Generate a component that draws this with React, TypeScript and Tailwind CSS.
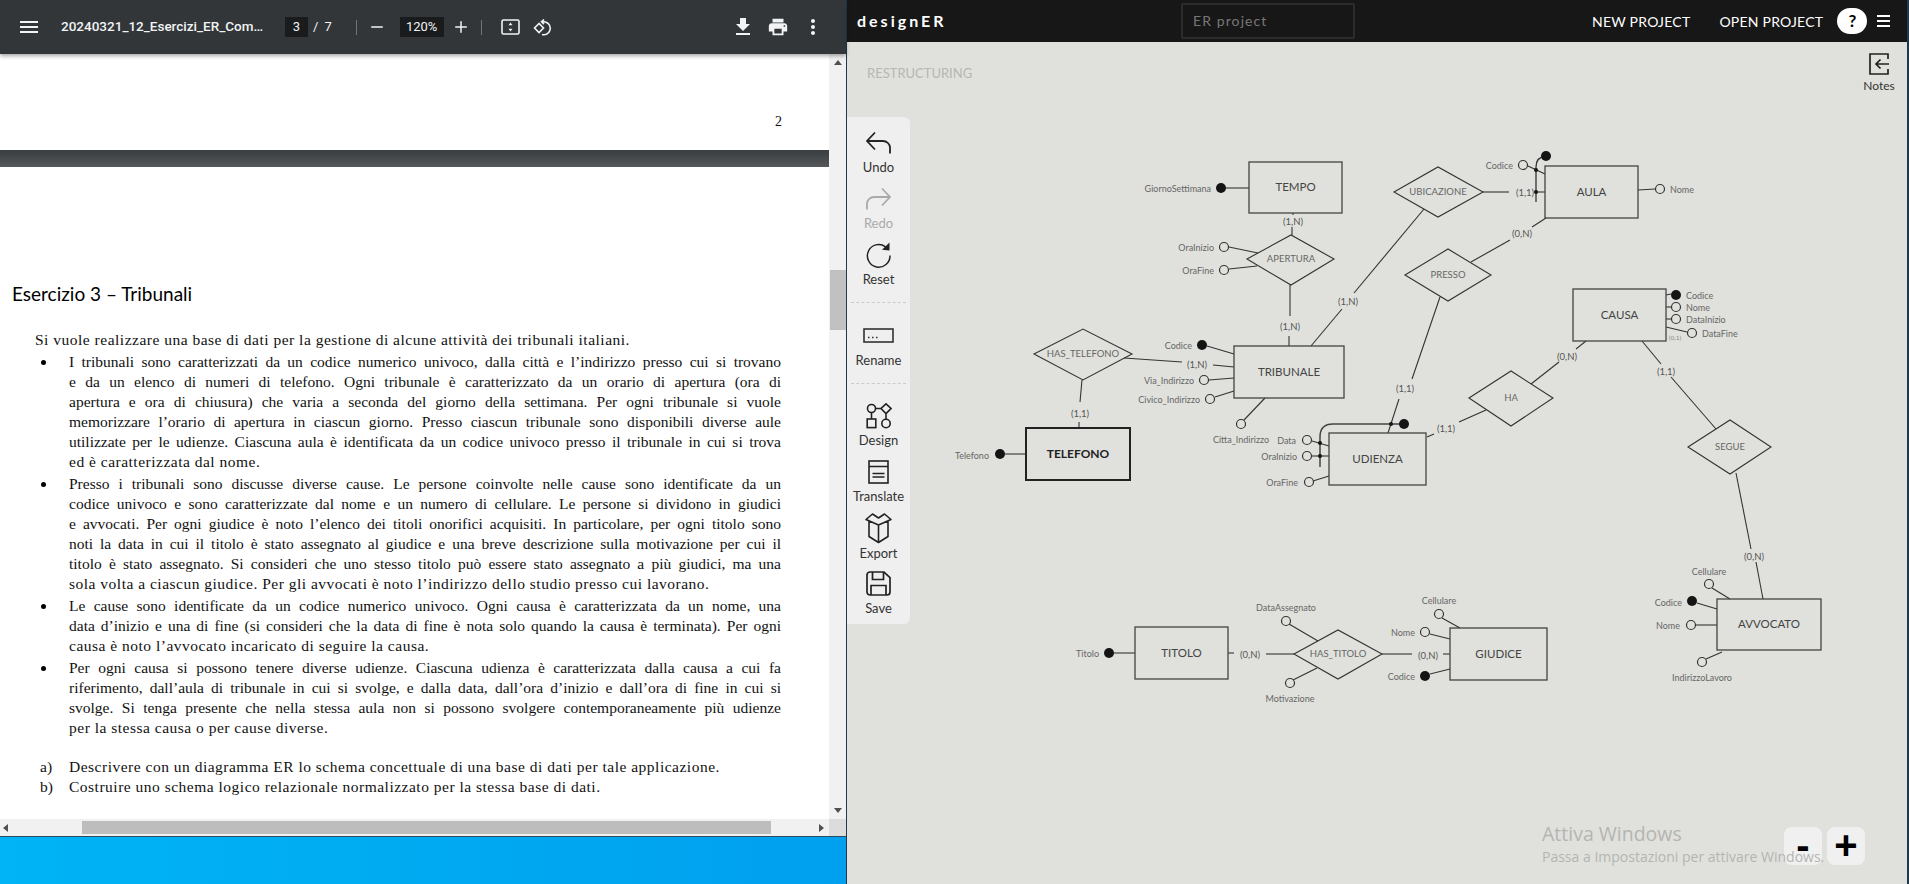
import { MdFileDownload, MdMenu, MdMoreVert, MdPrint } from "react-icons/md";
import { Minus, Plus } from "lucide-react";
import type { ReactNode } from "react";

// ---- PDF text, kept line by line so the wrapping is the same as the document
const bullets: string[][] = [
  [
    "I tribunali sono caratterizzati da un codice numerico univoco, dalla città e l’indirizzo presso cui si trovano",
    "e da un elenco di numeri di telefono. Ogni tribunale è caratterizzato da un orario di apertura (ora di",
    "apertura e ora di chiusura) che varia a seconda del giorno della settimana. Per ogni tribunale si vuole",
    "memorizzare l’orario di apertura in ciascun giorno. Presso ciascun tribunale sono disponibili diverse aule",
    "utilizzate per le udienze. Ciascuna aula è identificata da un codice univoco presso il tribunale in cui si trova",
    "ed è caratterizzata dal nome.",
  ],
  [
    "Presso i tribunali sono discusse diverse cause. Le persone coinvolte nelle cause sono identificate da un",
    "codice univoco e sono caratterizzate dal nome e un numero di cellulare. Le persone si dividono in giudici",
    "e avvocati. Per ogni giudice è noto l’elenco dei titoli onorifici acquisiti. In particolare, per ogni titolo sono",
    "noti la data in cui il titolo è stato assegnato al giudice e una breve descrizione sulla motivazione per cui il",
    "titolo è stato assegnato. Si consideri che uno stesso titolo può essere stato assegnato a più giudici, ma una",
    "sola volta a ciascun giudice. Per gli avvocati è noto l’indirizzo dello studio presso cui lavorano.",
  ],
  [
    "Le cause sono identificate da un codice numerico univoco. Ogni causa è caratterizzata da un nome, una",
    "data d’inizio e una di fine (si consideri che la data di fine è nota solo quando la causa è terminata). Per ogni",
    "causa è noto l’avvocato incaricato di seguire la causa.",
  ],
  [
    "Per ogni causa si possono tenere diverse udienze. Ciascuna udienza è caratterizzata dalla causa a cui fa",
    "riferimento, dall’aula di tribunale in cui si svolge, e dalla data, dall’ora d’inizio e dall’ora di fine in cui si",
    "svolge. Si tenga presente che nella stessa aula non si possono svolgere contemporaneamente più udienze",
    "per la stessa causa o per cause diverse.",
  ],
];

// ---- ER diagram, in page coordinates (svg viewBox starts at the canvas corner)
const entities: [string, number, number, number, number, boolean?][] = [
  ["TEMPO", 1249, 162, 1342, 213],
  ["TRIBUNALE", 1234, 346, 1344, 398],
  ["TELEFONO", 1026, 428, 1130, 480, true],
  ["AULA", 1545, 166, 1638, 218],
  ["UDIENZA", 1329, 433, 1426, 485],
  ["CAUSA", 1573, 289, 1666, 341],
  ["TITOLO", 1135, 627, 1228, 679],
  ["GIUDICE", 1450, 628, 1547, 680],
  ["AVVOCATO", 1717, 599, 1821, 650],
];

const diamonds: [string, number, number, number, number, number, number][] = [
  ["APERTURA", 1247, 259, 1334, 235, 285, 1291],
  ["UBICAZIONE", 1394, 192, 1483, 167, 217, 1438],
  ["PRESSO", 1405, 275, 1491, 249, 301, 1448],
  ["HAS_TELEFONO", 1034, 354, 1132, 329, 380, 1083],
  ["HA", 1469, 398, 1553, 371, 426, 1511],
  ["SEGUE", 1688, 447, 1771, 420, 474, 1730],
  ["HAS_TITOLO", 1294, 654, 1382, 630, 679, 1338],
];

const lines: number[][] = [
  [1226, 188, 1249, 188],
  [1293, 213, 1293, 215], [1292, 227, 1292, 235],
  [1229, 247, 1258, 253],
  [1229, 269, 1257, 266],
  [1290, 285, 1290, 316], [1289, 336, 1289, 346],
  [1311, 346, 1342, 309], [1354, 293, 1424, 209],
  [1483, 192, 1509, 192], [1535, 192, 1545, 192],
  [1638, 190, 1655, 189],
  [1528, 166, 1545, 174],
  [1546, 218, 1532, 227], [1510, 240, 1471, 262],
  [1440, 297, 1412, 379], [1399, 399, 1388, 433],
  [1207, 346, 1234, 354],
  [1124, 358, 1182, 362], [1213, 365, 1234, 367],
  [1209, 380, 1234, 378],
  [1215, 397, 1234, 391],
  [1244, 420, 1265, 398],
  [1082, 380, 1080, 402], [1079, 422, 1079, 428],
  [1005, 454, 1026, 454],
  [1312, 441, 1329, 446],
  [1312, 456, 1329, 456],
  [1313, 481, 1329, 476],
  [1427, 437, 1434, 434], [1459, 422, 1486, 410],
  [1531, 384, 1559, 362], [1576, 349, 1586, 341],
  [1642, 341, 1661, 364], [1671, 377, 1716, 429],
  [1666, 295, 1671, 294],
  [1666, 307, 1671, 307],
  [1666, 319, 1671, 319],
  [1666, 327, 1687, 332],
  [1736, 473, 1751, 549], [1756, 562, 1763, 599],
  [1712, 588, 1730, 599],
  [1697, 603, 1717, 609],
  [1696, 625, 1717, 625],
  [1706, 659, 1722, 652],
  [1442, 618, 1460, 628],
  [1430, 634, 1450, 639],
  [1430, 674, 1450, 669],
  [1382, 654, 1412, 654], [1443, 654, 1450, 654],
  [1114, 653, 1135, 653],
  [1228, 653, 1234, 653], [1266, 654, 1294, 654],
  [1289, 624, 1318, 641],
  [1293, 680, 1317, 668],
];

const hollow: number[][] = [
  [1224, 247], [1224, 270], [1660, 189], [1523, 165], [1204, 380], [1210, 399], [1241, 424],
  [1307, 440], [1307, 456], [1309, 482], [1676, 307], [1676, 319], [1692, 333], [1709, 584],
  [1691, 625], [1702, 662], [1439, 614], [1425, 632], [1286, 621], [1290, 683],
];

const solid: number[][] = [
  [1221, 188], [1202, 345], [1000, 454], [1546, 156], [1404, 424], [1676, 295], [1692, 601],
  [1425, 676], [1109, 653],
];

const junctions: number[][] = [
  [1536, 170], [1536, 192], [1391, 424], [1320, 443], [1320, 456],
];

const attributes: [string, number, number, "start" | "middle" | "end"][] = [
  ["GiornoSettimana", 1211, 188, "end"],
  ["OraInizio", 1214, 247, "end"],
  ["OraFine", 1214, 270, "end"],
  ["Codice", 1192, 345, "end"],
  ["Via_Indirizzo", 1194, 380, "end"],
  ["Civico_Indirizzo", 1200, 399, "end"],
  ["Citta_Indirizzo", 1241, 439, "middle"],
  ["Telefono", 989, 455, "end"],
  ["Codice", 1513, 165, "end"],
  ["Nome", 1670, 189, "start"],
  ["Data", 1296, 440, "end"],
  ["OraInizio", 1297, 456, "end"],
  ["OraFine", 1298, 482, "end"],
  ["Codice", 1686, 295, "start"],
  ["Nome", 1686, 307, "start"],
  ["DataInizio", 1686, 319, "start"],
  ["DataFine", 1702, 333, "start"],
  ["Cellulare", 1709, 571, "middle"],
  ["Codice", 1682, 602, "end"],
  ["Nome", 1680, 625, "end"],
  ["IndirizzoLavoro", 1702, 677, "middle"],
  ["Cellulare", 1439, 600, "middle"],
  ["Nome", 1415, 632, "end"],
  ["Codice", 1415, 676, "end"],
  ["Titolo", 1099, 653, "end"],
  ["DataAssegnato", 1286, 607, "middle"],
  ["Motivazione", 1290, 698, "middle"],
];

const cardinalities: [string, number, number][] = [
  ["(1,N)", 1293, 221],
  ["(1,N)", 1290, 326],
  ["(1,N)", 1348, 301],
  ["(1,N)", 1197, 364],
  ["(1,1)", 1080, 413],
  ["(1,1)", 1525, 192],
  ["(0,N)", 1522, 233],
  ["(1,1)", 1405, 388],
  ["(1,1)", 1446, 428],
  ["(0,N)", 1567, 356],
  ["(1,1)", 1666, 371],
  ["(0,N)", 1754, 556],
  ["(0,N)", 1250, 654],
  ["(0,N)", 1428, 655],
];

function Diagram() {
  return (
    <svg className="absolute left-0 top-0 h-[842px] w-[1060px]" viewBox="847 42 1060 842" fill="none">
      {lines.map(([x1, y1, x2, y2], i) => (
        <line key={i} x1={x1} y1={y1} x2={x2} y2={y2} stroke="#333" strokeWidth="1.1" />
      ))}
      <path d="M1536 202V167Q1536 157 1546 156" stroke="#333" strokeWidth="1.3" />
      <path d="M1320 467V437Q1320 424 1333 424H1404" stroke="#444" strokeWidth="1.5" />
      {entities.map(([name, x1, y1, x2, y2, strong]) => (
        <g key={name}>
          <rect x={x1} y={y1} width={x2 - x1} height={y2 - y1} stroke={strong ? "#222" : "#444"} strokeWidth={strong ? 2 : 1.3} />
          <text
            x={(x1 + x2) / 2}
            y={(y1 + y2) / 2 - 1}
            textAnchor="middle"
            dominantBaseline="central"
            className={strong ? "fill-[#222] text-[12px] font-bold" : "fill-[#444] text-[11.5px]"}
          >
            {name}
          </text>
        </g>
      ))}
      {diamonds.map(([name, l, cy, r, t, b, cx]) => (
        <g key={name}>
          <polygon points={`${l},${cy} ${cx},${t} ${r},${cy} ${cx},${b}`} stroke="#333" strokeWidth="1.1" />
          <text x={cx} y={cy - 1} textAnchor="middle" dominantBaseline="central" className="fill-[#666] text-[9.5px]">
            {name}
          </text>
        </g>
      ))}
      {hollow.map(([cx, cy], i) => (
        <circle key={i} cx={cx} cy={cy} r="4.5" fill="#e0e1dc" stroke="#333" strokeWidth="1.2" />
      ))}
      {solid.map(([cx, cy], i) => (
        <circle key={i} cx={cx} cy={cy} r="5" fill="#141414" />
      ))}
      {junctions.map(([cx, cy], i) => (
        <circle key={i} cx={cx} cy={cy} r="2" fill="#141414" />
      ))}
      {attributes.map(([label, x, y, anchor], i) => (
        <text key={i} x={x} y={y} textAnchor={anchor} dominantBaseline="central" className="fill-[#666] text-[9px]">
          {label}
        </text>
      ))}
      {cardinalities.map(([label, x, y], i) => (
        <text key={i} x={x} y={y} textAnchor="middle" dominantBaseline="central" className="fill-[#555] text-[9.5px]">
          {label}
        </text>
      ))}
      <text x="1675" y="337" textAnchor="middle" dominantBaseline="central" className="fill-[#888] text-[6.5px]">
        (0,1)
      </text>
    </svg>
  );
}

// ---- tool icons
function UndoIcon({ color }: { color: string }) {
  return (
    <svg width="25" height="23" viewBox="0 0 25 23" fill="none" stroke={color} strokeWidth="1.8">
      <path d="M9 1.5 1 10l8 8.5M1 10h16a7 7 0 0 1 7 6.5V22.5" />
    </svg>
  );
}

function RedoIcon({ color }: { color: string }) {
  return (
    <svg width="25" height="23" viewBox="0 0 25 23" fill="none" stroke={color} strokeWidth="1.8">
      <path d="M16 1.5 24 10l-8 8.5M24 10H8a7 7 0 0 0-7 6.5V22.5" />
    </svg>
  );
}

function ResetIcon() {
  return (
    <svg width="27" height="27" viewBox="0 0 27 27" fill="none" stroke="#222" strokeWidth="1.5">
      <path d="M20.5 5.8A11.3 11.3 0 1 0 25 14.5" />
      <path d="M24.5 1.5v8l-7.5-.8z" fill="#222" stroke="none" />
    </svg>
  );
}

function RenameIcon() {
  return (
    <svg width="31" height="15" viewBox="0 0 31 15" fill="none" stroke="#333" strokeWidth="1.6">
      <rect x="1" y="1" width="29" height="13" />
      <path d="M5 9.5h1.5M9 9.5h1.5M13 9.5h1.5" strokeWidth="1.4" />
    </svg>
  );
}

function DesignIcon() {
  return (
    <svg width="26" height="26" viewBox="0 0 26 26" fill="none" stroke="#222" strokeWidth="1.6">
      <circle cx="5.5" cy="5.5" r="4" />
      <path d="M20 .8 25 5.5 20 10.5 15 5.5zM9.5 5.5H15M5.5 9.5V16M20 10.5V16" />
      <rect x="1.2" y="16" width="8.6" height="8.6" />
      <circle cx="20" cy="20.5" r="4.2" />
    </svg>
  );
}

function TranslateIcon() {
  return (
    <svg width="21" height="24" viewBox="0 0 21 24" fill="none" stroke="#222" strokeWidth="1.6">
      <rect x="1" y="1" width="19" height="22" />
      <path d="M1 6.5h19M4.5 13.5h12M4.5 17h12" />
    </svg>
  );
}

function ExportIcon() {
  return (
    <svg width="29" height="32" viewBox="0 0 29 32" fill="none" stroke="#222" strokeWidth="1.6" strokeLinejoin="round">
      <path d="M14.5 13 2 7.5l6.5-5.5 6 4 6-4L27 7.500zM5 9.500V24.500l9.500 6 9.500-6V9.500M14.500 13v17.500" />
    </svg>
  );
}

function SaveIcon() {
  return (
    <svg width="25" height="25" viewBox="0 0 25 25" fill="none" stroke="#222" strokeWidth="1.7">
      <path d="M4 1h14l6 5.500V21a3 3 0 0 1-3 3H4a3 3 0 0 1-3-3V4a3 3 0 0 1 3-3z" />
      <path d="M6.500 1v7.500h11V1M5 24v-9.500h15V24" />
    </svg>
  );
}

function NotesIcon() {
  return (
    <svg width="20" height="22" viewBox="0 0 20 22" fill="none" stroke="#222" strokeWidth="1.7">
      <path d="M19 6V1H1v20h18v-5M20 11H7M11.500 6.500 7 11l4.500 4.500" />
    </svg>
  );
}

function FitIcon() {
  return (
    <svg width="19" height="16" viewBox="0 0 19 16" fill="none">
      <rect x="1" y="1" width="17" height="14" rx="1.500" stroke="#f1f3f4" strokeWidth="1.600" />
      <path d="M9.500 3.500 11.500 6.300h-4zM9.500 12.500 7.500 9.700h4z" fill="#f1f3f4" />
    </svg>
  );
}

function RotateIcon() {
  return (
    <svg width="19" height="17" viewBox="0 0 19 17" fill="none" stroke="#f1f3f4" strokeWidth="1.600">
      <path d="M6 4.500 1.500 9 6 13.500 10.500 9z" />
      <path d="M8.500 2.800h1.500a6.500 6.500 0 1 1-1 12.700M11 .5 8.500 2.800 11 5.200" />
    </svg>
  );
}

function Tool({ icon, label, muted }: { icon: ReactNode; label: string; muted?: boolean }) {
  return (
    <div className="flex h-[48px] w-full flex-col items-center">
      <div className="flex h-[30px] items-center justify-center">{icon}</div>
      <div className={muted ? "mt-[1px] text-[13px] leading-[18px] text-[#aaa]" : "mt-[1px] text-[13px] leading-[18px] text-[#333]"}>{label}</div>
    </div>
  );
}

function PdfLine({ text, last }: { text: string; last?: boolean }) {
  return (
    <div className={last ? "h-[20px] whitespace-nowrap leading-[20px] tracking-[0.5px]" : "h-[20px] text-justify leading-[20px] [text-align-last:justify]"}>
      {text}
    </div>
  );
}

function PdfPane() {
  return (
    <div className="flex h-full w-[846px] shrink-0 flex-col">
      {/* toolbar */}
      <div className="relative z-10 flex h-[54px] shrink-0 items-center bg-[#323639] pl-[18px] pr-[22px] text-[#f1f3f4] shadow-[0_2px_4px_rgba(0,0,0,0.35)] font-['Roboto',sans-serif]">
        <MdMenu size={24} className="-ml-[1px]" />
        <div className="ml-[20px] w-[205px] truncate text-[13.5px] font-medium leading-none">20240321_12_Esercizi_ER_Completo.pdf</div>
        <div className="ml-[19px] flex h-[20px] w-[23px] items-center justify-center bg-[#191b1c] text-[13px]">3</div>
        <div className="ml-[5px] text-[13px]">/</div>
        <div className="ml-[6px] text-[13px]">7</div>
        <div className="ml-[24px] h-[15px] w-px bg-[#71757a]" />
        <Minus size={18} strokeWidth={2} className="ml-[11px]" />
        <div className="ml-[14px] flex h-[20px] w-[44px] items-center justify-center bg-[#191b1c] text-[13px]">120%</div>
        <Plus size={18} strokeWidth={2} className="ml-[8px]" />
        <div className="ml-[11px] h-[15px] w-px bg-[#71757a]" />
        <div className="ml-[19px]"><FitIcon /></div>
        <div className="ml-[13px]"><RotateIcon /></div>
        <div className="ml-auto flex items-center gap-[12px]">
          <MdFileDownload size={24} />
          <MdPrint size={22} />
          <MdMoreVert size={24} className="-mr-[1px]" />
        </div>
      </div>

      {/* document and vertical scrollbar */}
      <div className="flex min-h-0 flex-1">
        <div className="flex w-[829px] flex-col bg-white font-['Liberation_Serif',serif] text-[15.5px] text-[#111]">
          <div className="flex h-[96px] shrink-0 flex-col overflow-hidden">
            <div className="flex h-[20px] -mt-[15px] pl-[46px] leading-[20px]">
              <span className="w-[192px]">7</span>
              <span className="w-[199px]">0</span>
              <span>1</span>
            </div>
            <div className="mt-[53px] pl-[775px] text-[14px] leading-[20px]">2</div>
          </div>
          <div className="h-[17px] shrink-0 bg-linear-to-b from-[#3b3e40] to-[#54585a]" />
          <div className="min-h-0 flex-1 overflow-hidden pt-[115px]">
            <div className="pl-[12px] font-['Lato',sans-serif] text-[19px] leading-[24px] text-black">Esercizio 3 – Tribunali</div>
            <div className="mt-[24px] pl-[35px]"><PdfLine text="Si vuole realizzare una base di dati per la gestione di alcune attività dei tribunali italiani." last /></div>
            <div className="mt-[2px] flex flex-col gap-[2px]">
              {bullets.map((group, i) => (
                <div key={i} className="flex">
                  <div className="flex h-[20px] w-[69px] shrink-0 items-center pl-[40.500px]">
                    <div className="size-[5px] rounded-full bg-black" />
                  </div>
                  <div className="w-[712px]">
                    {group.map((text, j) => (
                      <PdfLine key={j} text={text} last={j === group.length - 1} />
                    ))}
                  </div>
                </div>
              ))}
            </div>
            <div className="mt-[19px] flex">
              <div className="w-[69px] shrink-0 pl-[40px] leading-[20px]">a)</div>
              <PdfLine text="Descrivere con un diagramma ER lo schema concettuale di una base di dati per tale applicazione." last />
            </div>
            <div className="flex">
              <div className="w-[69px] shrink-0 pl-[40px] leading-[20px]">b)</div>
              <PdfLine text="Costruire uno schema logico relazionale normalizzato per la stessa base di dati." last />
            </div>
          </div>
        </div>
        <div className="flex w-[17px] shrink-0 flex-col items-center bg-[#f1f1f1]">
          <div className="mt-[6px] size-0 border-x-[4px] border-b-[5px] border-x-transparent border-b-[#505050]" />
          <div className="mt-[205px] ml-[1px] h-[60px] w-[16px] bg-[#c1c1c1]" />
          <div className="mt-auto mb-[6px] size-0 border-x-[4px] border-t-[5px] border-x-transparent border-t-[#505050]" />
        </div>
      </div>

      {/* horizontal scrollbar */}
      <div className="flex h-[17px] shrink-0 items-center">
        <div className="flex h-full w-[829px] items-center bg-[#f1f1f1] pl-[3px] pr-[5px]">
          <div className="size-0 border-y-[4px] border-r-[5px] border-y-transparent border-r-[#505050]" />
          <div className="ml-[74px] h-[13px] w-[689px] bg-[#bdbdbd]" />
          <div className="ml-auto size-0 border-y-[4px] border-l-[5px] border-y-transparent border-l-[#505050]" />
        </div>
        <div className="h-full flex-1 bg-[#dcdcdc]" />
      </div>

      {/* desktop showing under the window */}
      <div className="h-[48px] shrink-0 border-t border-[#2a4a60] bg-linear-to-r from-[#00b4f5] to-[#00a0ee]" />
    </div>
  );
}

function DesignerPane() {
  return (
    <div className="flex h-full min-w-0 flex-1 flex-col font-['Lato',sans-serif]">
      {/* navbar */}
      <div className="flex h-[42px] shrink-0 items-center bg-[#171717] pl-[10px] text-white">
        <div className="w-[324px] text-[16px] font-bold tracking-[3px]">designER</div>
        <div className="flex h-[36px] w-[174px] items-center rounded-[2px] border-2 border-[#2c2c2c] pb-[2px] pl-[10px] text-[14px] tracking-[1.100px] text-[#777]">ER project</div>
        <div className="ml-[237px] text-[14px] tracking-[0.230px]">NEW PROJECT</div>
        <div className="ml-[29px] text-[14px] tracking-[0.230px]">OPEN PROJECT</div>
        <div className="ml-[14px] flex h-[26px] w-[30px] items-center justify-center rounded-full bg-white text-[17px] font-bold text-black">?</div>
        <div className="ml-[10px] flex w-[13px] flex-col gap-[3.500px]">
          <div className="h-[1.500px] bg-white" />
          <div className="h-[1.500px] bg-white" />
          <div className="h-[1.500px] bg-white" />
        </div>
      </div>

      {/* canvas */}
      <div className="relative min-h-0 flex-1 bg-[#e0e1dc]">
        <Diagram />

        <div className="absolute left-[20px] top-[24px] text-[13px] leading-[14px] text-[#b5b7b5]">RESTRUCTURING</div>

        <div className="absolute right-[9px] top-[11px] flex w-[38px] flex-col items-center">
          <NotesIcon />
          <div className="mt-[4px] text-[12px] leading-[14px] text-[#333]">Notes</div>
        </div>

        <div className="relative mt-[75px] flex w-[63px] flex-col items-center rounded-r-[6px] bg-[#efefef] pb-[7px] pt-[11px]">
          <div className="flex w-full flex-col gap-[8px]">
            <Tool icon={<UndoIcon color="#222" />} label="Undo" />
            <Tool icon={<RedoIcon color="#aaa" />} label="Redo" muted />
            <Tool icon={<ResetIcon />} label="Reset" />
          </div>
          <div className="mt-[14px] w-[55px] border-t border-dashed border-[#ccc]" />
          <div className="mt-[18px] w-full">
            <Tool icon={<RenameIcon />} label="Rename" />
          </div>
          <div className="mt-[14px] w-[55px] border-t border-dashed border-[#ccc]" />
          <div className="mt-[17px] flex w-full flex-col gap-[8px]">
            <Tool icon={<DesignIcon />} label="Design" />
            <Tool icon={<TranslateIcon />} label="Translate" />
            <Tool icon={<ExportIcon />} label="Export" />
            <Tool icon={<SaveIcon />} label="Save" />
          </div>
        </div>

        {/* zoom buttons */}
        <div className="absolute bottom-[19px] right-[42px] flex gap-[5px]">
          <div className="flex size-[38px] items-center justify-center rounded-[8px] bg-[#f0f0f0] pb-[3px] font-['Liberation_Sans',sans-serif] text-[40px] font-bold leading-none text-black">-</div>
          <div className="flex size-[38px] items-center justify-center rounded-[8px] bg-[#f0f0f0] pb-[3px] font-['Liberation_Sans',sans-serif] text-[40px] font-bold leading-none text-black">+</div>
        </div>

        {/* Windows activation watermark */}
        <div className="absolute left-[695px] top-[778px] font-['Open_Sans',sans-serif] text-[#b4b5b2]">
          <div className="text-[19.500px] leading-[28px]">Attiva Windows</div>
          <div className="whitespace-nowrap text-[14px] leading-[18px]">Passa a Impostazioni per attivare Windows.</div>
        </div>
      </div>
    </div>
  );
}

export default function App() {
  return (
    <div className="flex h-[884px] w-[1909px] overflow-hidden bg-[#e0e1dc]">
      <PdfPane />
      <div className="w-px shrink-0 bg-[#1f3a4d]" />
      <DesignerPane />
      <div className="w-[2px] shrink-0 bg-[#1f3a4d]" />
    </div>
  );
}
